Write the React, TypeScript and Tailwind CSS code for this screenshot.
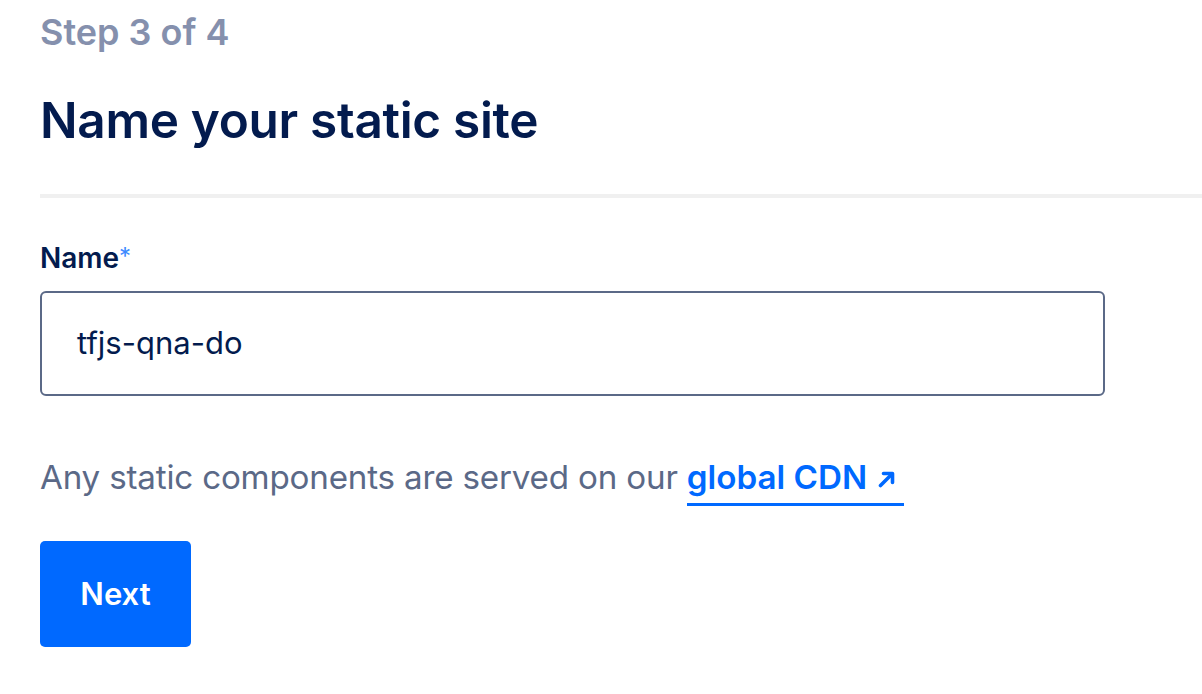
export default function App() {
  return (
    <div className="min-h-screen bg-white pl-[40px] font-['Inter',sans-serif]">
      <p className="pt-[12px] text-[36px] font-semibold leading-[40px] tracking-[0px] text-[#8590ad]">Step 3 of 4</p>
      <h1 className="mt-[40px] text-[49.5px] font-semibold leading-[56px] tracking-[-0.3px] text-[#031b4e]">Name your static site</h1>

      <div className="mt-[46px] h-[4px] bg-[#f0f0f0]" />

      <label className="mt-[43px] block text-[28px] font-semibold leading-[34px] text-[#031b4e]">
        Name<span className="relative -top-[3px] text-[24px] font-normal text-[#3d8bff]">*</span>
      </label>
      <div className="mt-[14px] flex h-[105px] w-[1065px] items-center rounded-[6px] border-2 border-[#5b6987] pl-[35px]">
        <span className="text-[31px] text-[#031b4e]">tfjs-qna-do</span>
      </div>

      <p className="mt-[61px] text-[33.2px] leading-[40px] tracking-[-0.2px] text-[#5b6987]">
        Any static components are served on our{" "}
        <a className="inline-block border-b-[3px] border-[#0069ff] pb-[6px] pr-[9px] font-semibold tracking-[0px] text-[#0069ff]">
          global CDN
          <svg className="ml-[11px] inline-block align-[1px]" width="17" height="17" viewBox="0 0 17 17" fill="none" stroke="#0069ff" strokeWidth="3.6" strokeLinecap="round" strokeLinejoin="round">
            <path d="M2.5 14.5 L13.5 3.5" />
            <path d="M5.5 2.5 H14.5 V11.5" />
          </svg>
        </a>
      </p>

      <button className="mt-[35px] block h-[106px] w-[151px] rounded-[5px] bg-[#0069ff] text-[31px] font-semibold text-white">
        Next
      </button>
    </div>
  )
}
